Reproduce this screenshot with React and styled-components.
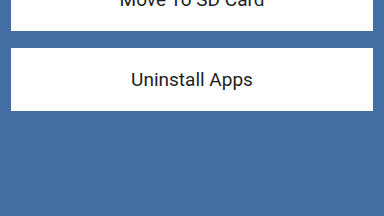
import React from "react";
import styled, { createGlobalStyle } from "styled-components";

const GlobalStyle = createGlobalStyle`
  html, body {
    margin: 0;
    padding: 0;
    background: #436ea3;
    overflow: hidden;
  }
`;

const Screen = styled.div`
  width: 384px;
  height: 216px;
  background: #436ea3;
  overflow: hidden;
`;

const List = styled.div`
  display: flex;
  flex-direction: column;
  gap: 17px;
  padding: 0 11px;
  margin-top: -32px;
`;

const Card = styled.div`
  height: 63px;
  background: #fefefe;
  display: flex;
  align-items: center;
  justify-content: center;
  font-family: Roboto, "Liberation Sans", sans-serif;
  font-size: 19px;
  color: #1e1e1e;
`;

const options = ["Move To SD Card", "Uninstall Apps"];

export default function App() {
  return (
    <Screen>
      <GlobalStyle />
      <List>
        {options.map((label) => (
          <Card key={label}>{label}</Card>
        ))}
      </List>
    </Screen>
  );
}
